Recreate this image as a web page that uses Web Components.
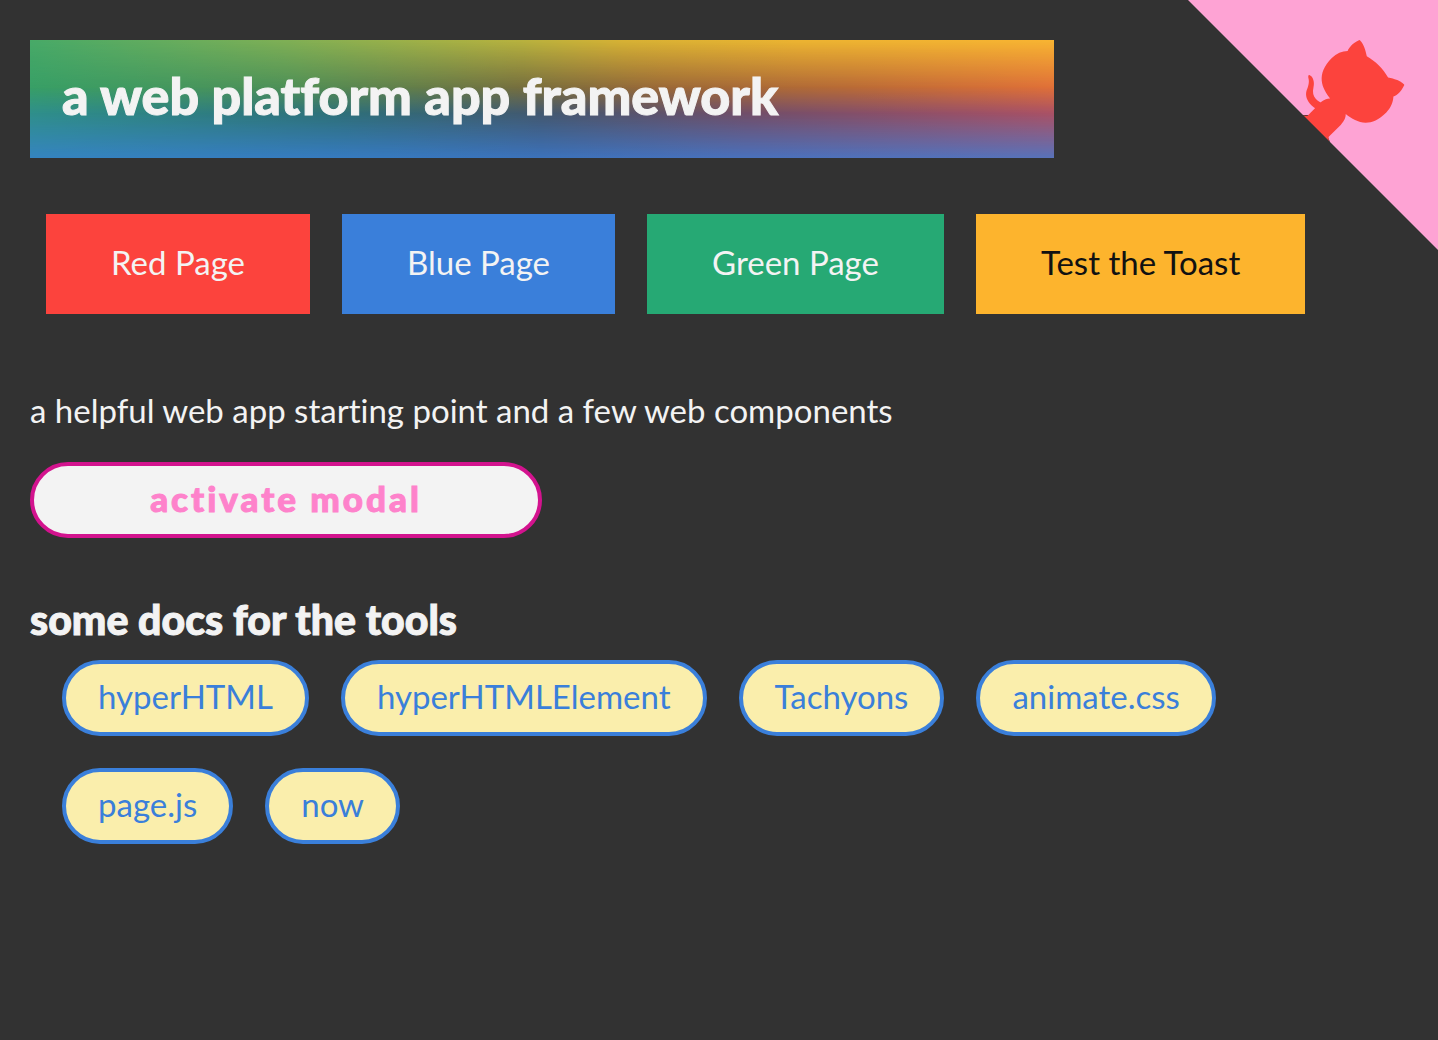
<!DOCTYPE html>
<html lang="en">
<head>
<meta charset="utf-8">
<title>a web platform app framework</title>
<style>
body { margin: 0; min-height: 100vh; background: #323232; color: #f3f3f3; font-family: Lato, "Open Sans", sans-serif; font-size: 33px; line-height: 48px; font-variant-ligatures: none; }
</style>
</head>
<body>
<app-home></app-home>
<script>
const define = (name, html) => customElements.define(name, class extends HTMLElement {
  constructor() {
    super();
    this.attachShadow({ mode: 'open' }).innerHTML = html;
  }
});

define('gradient-banner', `
<style>
:host { display: block; position: relative; width: 1024px; max-width: 100%; box-sizing: border-box; padding: 23px 32px 31px; isolation: isolate; }
.wash { position: absolute; inset: 0; z-index: -1; }
.top { background: linear-gradient(to right, #48aa68, #80b055 25%, #b9b33e 48%, #d8b334 58%, #edb531 75%, #f8b532); }
.upper { background: linear-gradient(to right, #389f66, #4e9057 25%, #766f3e 48%, #9c6937 62%, #b96b36 80%, #e07038);
  mask-image: linear-gradient(to bottom, transparent, #000 40%); }
.lower { background: linear-gradient(to right, #2f8f8b, #2e7079 30%, #435870 50%, #714e69 70%, #834f69 80%, #aa5165);
  mask-image: linear-gradient(to bottom, transparent 40%, #000 62%); }
.bottom { background: linear-gradient(to right, #3584c0, #3779c0 35%, #3c72bb 50%, #4a71bc 70%, #5872ba);
  mask-image: linear-gradient(to bottom, transparent 62%, #000); }
h1 { margin: 0; font-size: 52px; line-height: 64px; font-weight: 900; -webkit-text-stroke: 1px currentColor; }
</style>
<div class="wash top"></div><div class="wash upper"></div><div class="wash lower"></div><div class="wash bottom"></div>
<h1><slot></slot></h1>`);

define('page-button', `
<style>
:host { display: block; --tone: #fc433d; --ink: #f3f3f3; }
:host([tone=blue]) { --tone: #3a7fda; }
:host([tone=green]) { --tone: #26a974; }
:host([tone=gold]) { --tone: #fdb42d; --ink: #111; }
button { display: block; border: 0; margin: 0; padding: 24px 65px 28px; background: var(--tone); color: var(--ink); font: inherit; cursor: pointer; }
</style>
<button type="button"><slot></slot></button>`);

define('modal-button', `
<style>
:host { display: block; width: 512px; max-width: 100%; }
button { display: block; width: 100%; margin: 0; padding: 8px 32px 12px; border: 4px solid #d3138e; border-radius: 38px; background: #f3f3f3; color: #fe82cb; font: inherit; font-size: 35px; font-weight: 900; letter-spacing: 3px; -webkit-text-stroke: 1px currentColor; cursor: pointer; }
</style>
<button type="button"><slot></slot></button>`);

define('doc-link', `
<style>
:host { display: block; }
a { display: block; padding: 8px 32px 12px; border: 4px solid #3a7fda; border-radius: 38px; background: #faeeac; color: #3a7fda; text-decoration: none; }
</style>
<a href="#"><slot></slot></a>`);

define('github-corner', `
<style>
:host { display: block; position: absolute; top: 0; right: 0; }
a, svg { display: block; }
</style>
<a href="#" aria-label="View source on GitHub">
<svg width="250" height="250" viewBox="0 0 250 250" aria-hidden="true">
<path fill="#fea3d4" d="M0,0 L115,115 L130,115 L142,142 L250,250 L250,0 Z"/>
<path fill="#fc433d" d="M128.3,109.0 C113.8,99.7 119.0,89.6 119.0,89.6 C122.0,82.7 120.5,78.6 120.5,78.6 C119.2,72.0 123.4,76.3 123.4,76.3 C127.3,80.9 125.5,87.3 125.5,87.3 C122.9,97.6 130.6,101.9 134.4,103.2"/>
<path fill="#fc433d" d="M115.0,115.0 C114.9,115.1 118.7,116.5 119.8,115.4 L133.7,101.6 C136.9,99.2 139.9,98.4 142.2,98.6 C133.8,88.0 127.5,74.4 143.8,58.0 C148.5,53.4 154.0,51.2 159.7,51.0 C160.3,49.4 163.2,43.6 171.4,40.1 C171.4,40.1 176.1,42.5 178.8,56.2 C183.1,58.6 187.2,61.8 190.9,65.4 C194.5,69.0 197.7,73.2 200.1,77.6 C213.8,80.2 216.3,84.9 216.3,84.9 C212.7,93.1 206.9,96.0 205.4,96.6 C205.1,102.4 203.0,107.8 198.3,112.5 C181.9,128.9 168.3,122.5 157.7,114.1 C157.9,116.9 156.7,120.9 152.7,124.9 L141.0,136.5 C139.8,137.7 141.6,141.9 141.8,141.8 Z"/>
</svg></a>`);

define('app-home', `
<style>
:host { display: block; padding: 40px 30px; }
nav { display: flex; flex-wrap: wrap; gap: 32px; padding: 56px 16px 72px; }
p { margin: 0 0 28px; }
h2 { margin: 58px 0 16px; font-size: 41px; line-height: 48px; font-weight: 900; -webkit-text-stroke: 1px currentColor; }
.docs { display: flex; flex-wrap: wrap; gap: 32px; padding-left: 32px; }
</style>
<github-corner></github-corner>
<gradient-banner>a web platform app framework</gradient-banner>
<nav>
<page-button>Red Page</page-button>
<page-button tone="blue">Blue Page</page-button>
<page-button tone="green">Green Page</page-button>
<page-button tone="gold">Test the Toast</page-button>
</nav>
<p>a helpful web app starting point and a few web components</p>
<modal-button>activate modal</modal-button>
<h2>some docs for the tools</h2>
<div class="docs">
<doc-link>hyperHTML</doc-link>
<doc-link>hyperHTMLElement</doc-link>
<doc-link>Tachyons</doc-link>
<doc-link>animate.css</doc-link>
<doc-link>page.js</doc-link>
<doc-link>now</doc-link>
</div>`);
</script>
</body>
</html>
